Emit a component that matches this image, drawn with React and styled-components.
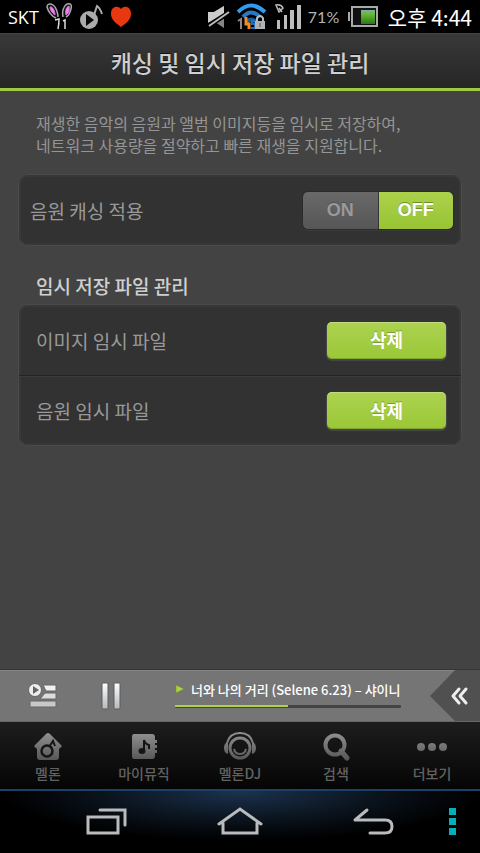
import React, { useState } from 'react';
import styled, { createGlobalStyle } from 'styled-components';

const GlobalStyle = createGlobalStyle`
  * {
    box-sizing: border-box;
  }

  body {
    margin: 0;
    background-color: #434343;
    font-family: 'Noto Sans CJK KR', 'Noto Sans', sans-serif;
  }

  button, input {
    font-family: inherit;
  }

  svg {
    flex-shrink: 0;
  }
`;

const PageContainer = styled.div`
  display: flex;
  flex-direction: column;
  min-height: 100vh;
  background-color: #434343;
`;

const StatusBar = styled.div`
  display: flex;
  justify-content: space-between;
  align-items: center;
  height: 33px;
  padding: 0 8px;
  background-color: black;
  color: white;
`;

const StatusGroup = styled.div`
  display: flex;
  align-items: center;
  gap: ${({ $gap }) => $gap}px;
`;

const Carrier = styled.span`
  font-family: 'Open Sans', sans-serif;
  font-size: 18px;
  line-height: 32px;
`;

const BatteryLevel = styled.span`
  width: 34px;
  color: #b5b5b5;
  font-family: Lato, sans-serif;
  font-size: 16px;
  white-space: nowrap;
`;

const Clock = styled.time`
  margin-left: 4px;
  font-size: 21px;
  line-height: 32px;
  white-space: nowrap;
`;

const Header = styled.header`
  display: flex;
  justify-content: center;
  align-items: center;
  height: 58px;
  border-bottom: 3px solid #9fcb41;
  background: linear-gradient(#393939, #262626);
  box-shadow: inset 0 1px #444;

  h1 {
    margin: 0;
    padding-top: 2px;
    color: #cfcfcf;
    font-size: 23px;
    font-weight: 500;
    line-height: 32px;
    text-shadow: 0 -1px #111;
  }
`;

const Content = styled.main`
  flex: 1;
  padding: 21px 18px;
`;

const Description = styled.p`
  margin: 0 18px 18px;
  color: #959595;
  font-size: 16px;
  line-height: 22px;
`;

const Panel = styled.section`
  border: 1px solid #4a4a4a;
  border-radius: 10px;
  background-color: #323232;
  box-shadow: inset 0 0 0 2px #373737;
`;

const SectionTitle = styled.h2`
  margin: 24px 18px 2px;
  color: #cfcfcf;
  font-size: 19px;
  font-weight: 500;
  line-height: 32px;
`;

const Row = styled.div`
  display: flex;
  justify-content: space-between;
  align-items: center;
  height: 70px;
  padding: ${({ $wide }) => ($wide ? '0 8px 0 11px' : '0 15px 0 17px')};
  color: #999;
  font-size: 19px;

  & + & {
    border-top: 1px solid #242424;
    box-shadow: inset 0 1px #3c3c3c;
  }
`;

const Switch = styled.div`
  display: flex;
  width: 150px;
  height: 37px;
  overflow: hidden;
  border-radius: 5px;
  box-shadow: 0 0 0 1px #2b2b2b, 0 2px #3b3b3b;
`;

const SwitchOption = styled.label`
  display: flex;
  flex: 1;
  justify-content: center;
  align-items: center;
  background: linear-gradient(#696969, #565656);
  color: #9a9a9a;
  font-family: 'Liberation Sans', Arial, sans-serif;
  font-size: 18px;
  font-weight: bold;
  text-shadow: 0 -1px #505050;
  cursor: pointer;

  & + & {
    border-left: 1px solid #343434;
  }

  input {
    appearance: none;
    width: 0;
    height: 0;
    margin: 0;
  }

  &:has(input:checked) {
    background: linear-gradient(#acd14b, #98c434);
    color: white;
    text-shadow: 0 -1px #6d912a;
  }
`;

const DeleteButton = styled.button`
  width: 119px;
  height: 37px;
  padding: 0 0 2px;
  border: none;
  border-radius: 5px;
  background: linear-gradient(#add250, #9ac737);
  box-shadow: inset 0 1px #c0dc7c, inset 0 -1px #7fa62d, 0 1px 1px 1px #484848;
  color: white;
  font-size: 18px;
  font-weight: 700;
  text-shadow: 0 -1px #7a9f30;
  cursor: pointer;
`;

const PlayerBar = styled.section`
  display: flex;
  align-items: stretch;
  height: 53px;
  border-top: 1px solid #353535;
  border-bottom: 1px solid #666;
  background-color: #757575;
  box-shadow: inset 0 1px #858585;
`;

const IconButton = styled.button`
  display: flex;
  justify-content: center;
  align-items: center;
  width: ${({ $width }) => $width}px;
  padding: 0;
  border: none;
  background: none;
  cursor: pointer;
`;

const Track = styled.div`
  flex: 1;
  min-width: 0;
  padding: 8px 29px 0 39px;
`;

const TrackTitle = styled.div`
  display: flex;
  align-items: center;
  gap: 6px;
  height: 22px;
  color: white;
  font-size: 13px;
  font-weight: 500;
  white-space: nowrap;
`;

const Progress = styled.div`
  height: 3px;
  margin-top: 5px;
  border-radius: 1px;
  background-color: #444;
`;

const ProgressFill = styled.div`
  height: 2px;
  background-color: #a9d443;
`;

const TabBar = styled.nav`
  display: flex;
  height: 67px;
  background: linear-gradient(#1d1d1d, #050505);
`;

const Tab = styled.a`
  display: flex;
  flex: 1;
  flex-direction: column;
  align-items: center;
  padding-top: 10px;
  color: #626262;
  font-size: 14px;
  font-weight: 500;
  line-height: 22px;
  text-decoration: none;
  white-space: nowrap;
`;

const SystemBar = styled.footer`
  display: flex;
  align-items: center;
  height: 64px;
  border-top: 2px solid #1d4069;
  background: radial-gradient(ellipse 50% 80% at 50% 0, #1b3350, #0a121b 60%, black);
`;

const SystemKeys = styled.div`
  display: flex;
  flex: 1;
  justify-content: center;
  gap: 87px;
  padding-left: 54px;
`;

const BunnyIcon = () => (
  <svg width="27" height="28" viewBox="0 0 27 28" fill="#111" stroke="#aaa" strokeWidth="1.500">
    <path d="M10 15C6 14 2 8 1 4C1 1 4 0 7 2C10 4 12 10 12 14" />
    <path d="M17 14C16 9 17 3 21 1C25 0 26 2 25 6C24 10 22 13 20 14" />
    <path
      d="M9 12C6 10 4 7 4 4C6 3 9 7 9 12ZM20 12C19 8 20 4 23 3C24 6 23 10 20 12Z"
      fill="#ee82ee"
      stroke="#d678df"
      strokeWidth="1"
    />
    <path d="M9 17L13 16Q13 21 12 26M17 18L19 17V26" fill="none" stroke="#ddd" />
  </svg>
);

const MelonStatusIcon = () => (
  <svg width="23" height="26" viewBox="0 0 23 26">
    <circle cx="9" cy="16" r="9" fill="#ababab" />
    <path d="M6 10L14 16L6 22Z" fill="#080808" />
    <path d="M14 11L17 2Q20 4 22 10" fill="none" stroke="#ababab" strokeWidth="2" />
  </svg>
);

const HeartIcon = () => (
  <svg width="22" height="22" viewBox="0 0 22 22">
    <path
      d="M11 3C14-1 21 0 21 8C21 14 15 18 11 21C7 18 1 14 1 8C1 0 8-1 11 3Z"
      fill="#e8380f"
    />
  </svg>
);

const MuteIcon = () => (
  <svg width="24" height="26" viewBox="0 0 24 26">
    <path d="M1 8H7L17 2V24L8 18H1Z" fill="#858585" />
    <path d="M1 8H7L17 2V10L1 19Z" fill="#ccc" />
    <path d="M1 22L23 8" stroke="black" strokeWidth="5" />
    <path d="M2 22L22 8" stroke="#bbb" strokeWidth="2" />
  </svg>
);

const WifiIcon = () => (
  <svg width="31" height="27" viewBox="0 0 31 27">
    <g fill="none" strokeWidth="4">
      <path d="M1 9Q14-4 28 9" stroke="#2f9cf0" />
      <path d="M6 14Q14 5 23 14" stroke="#2878c4" />
      <path d="M10 19Q14 14 19 19" stroke="#1d5ba0" />
    </g>
    <path d="M1 18L4 16V26" fill="none" stroke="#888" strokeWidth="2" />
    <path d="M9 14V21H12V26" fill="none" stroke="#f68a1d" strokeWidth="3" />
    <path d="M19 18H15V21H18V25H14" fill="none" stroke="#2274ba" strokeWidth="2" />
    <path d="M20 19V15Q23 11 26 15V19" fill="none" stroke="#bbb" strokeWidth="2" />
    <rect x="18" y="18" width="10" height="8" fill="#b2b2b2" />
    <path d="M23 20V24" stroke="#555" />
  </svg>
);

const SignalIcon = () => (
  <svg width="28" height="27" viewBox="0 0 28 27">
    <path d="M3 17H6V26H3ZM10 12H13V26H10ZM16 7H20V26H16ZM23 2H27V26H23Z" fill="#bdbdbd" />
    <path d="M2 2Q7 1 9 5L5 9ZM5 5L8 9" fill="none" stroke="#bdbdbd" strokeWidth="1.500" />
  </svg>
);

const BatteryIcon = () => (
  <svg width="30" height="22" viewBox="0 0 30 22">
    <defs>
      <linearGradient id="charge" x1="0" y1="0" x2="0" y2="1">
        <stop offset="0" stopColor="#78b6a0" />
        <stop offset="0.350" stopColor="#68b32c" />
        <stop offset="1" stopColor="#24791c" />
      </linearGradient>
    </defs>
    <path d="M1 6V15" stroke="#aaa" strokeWidth="2" />
    <rect x="4" y="1" width="25" height="19" fill="#111" stroke="#aaa" strokeWidth="2" />
    <rect x="13" y="4" width="14" height="14" fill="url(#charge)" />
  </svg>
);

const PlaylistIcon = () => (
  <svg width="30" height="28" viewBox="0 0 30 28">
    <path d="M15 3H28V9H18Z" fill="#f0f0f0" stroke="#666" />
    <path d="M17 11H28V17H12Z" fill="#ddd" stroke="#666" />
    <rect x="2" y="19" width="26" height="6" rx="1" fill="#c8c8c8" stroke="#666" />
    <circle cx="7" cy="8" r="6.500" fill="#eee" stroke="#666" />
    <path d="M5 4L11 8L5 12Z" fill="#666" />
  </svg>
);

const PauseIcon = () => (
  <svg width="20" height="28" viewBox="0 0 20 28">
    <defs>
      <linearGradient id="metal" x1="0" y1="0" x2="0" y2="1">
        <stop offset="0" stopColor="#fff" />
        <stop offset="1" stopColor="#b3b9be" />
      </linearGradient>
    </defs>
    <rect x="1" y="1" width="6" height="26" rx="1" fill="url(#metal)" stroke="#5c5c5c" />
    <rect x="13" y="1" width="6" height="26" rx="1" fill="url(#metal)" stroke="#5c5c5c" />
  </svg>
);

const PlayIcon = () => (
  <svg width="10" height="10" viewBox="0 0 10 10">
    <path d="M1 1L9 5L1 9Z" fill="#a9d443" stroke="#668a27" strokeWidth="0.500" />
  </svg>
);

const ExpandIcon = () => (
  <svg width="50" height="51" viewBox="0 0 50 51">
    <path d="M0 26L25 0H50V51H25Z" fill="#505050" />
    <path
      d="M29 19L23 26L29 33M36 19L30 26L36 33"
      fill="none"
      stroke="#eee"
      strokeWidth="3"
      strokeLinecap="round"
      strokeLinejoin="round"
    />
  </svg>
);

const MelonIcon = () => (
  <>
    <path d="M1 14L13 2Q15 0 17 2L29 14L26 17V25Q26 28 23 28H7Q4 28 4 25V17Z" fill="url(#tab)" />
    <circle cx="14" cy="19" r="5.500" fill="none" stroke="#151515" strokeWidth="2.500" />
    <path d="M16 15L20 9L22 14" fill="none" stroke="#151515" strokeWidth="2" />
  </>
);

const MyMusicIcon = () => (
  <>
    <path
      d="M5 2H23Q26 2 26 5V8H28V11H26V13H28V16H26V18H28V21H26V24Q26 27 23 27H5Q3 27 3 24V5Q3 2 5 2Z"
      fill="url(#tab)"
    />
    <path d="M15 19V8Q16 12 20 13V17" fill="none" stroke="#151515" strokeWidth="2" />
    <ellipse cx="13" cy="19" rx="3.500" ry="3" fill="#151515" />
  </>
);

const DjIcon = () => (
  <>
    <g fill="none" stroke="url(#tab)">
      <path d="M2 11C4 4 9 1 15 1S26 4 28 11" strokeWidth="2" />
      <circle cx="15" cy="16" r="10" strokeWidth="3" />
      <path d="M9 17Q10 22 15 22Q20 22 21 17" strokeWidth="2" />
    </g>
    <path d="M3 10Q-1 11-1 16T3 22ZM27 10Q31 11 31 16T27 22Z" fill="url(#tab)" />
  </>
);

const SearchIcon = () => (
  <g fill="none" stroke="url(#tab)">
    <circle cx="14" cy="13" r="9.500" strokeWidth="4" />
    <path d="M20 19L26 26" strokeWidth="5" strokeLinecap="round" />
  </g>
);

const MoreIcon = () => (
  <g fill="url(#tab)">
    <circle cx="4" cy="15" r="4" />
    <circle cx="15" cy="15" r="4" />
    <circle cx="26" cy="15" r="4" />
  </g>
);

const TabIcon = ({ children }) => (
  <svg width="34" height="30" viewBox="-2 0 34 30">
    <defs>
      <linearGradient id="tab" gradientUnits="userSpaceOnUse" x1="0" y1="0" x2="0" y2="29">
        <stop offset="0" stopColor="#929292" />
        <stop offset="1" stopColor="#555" />
      </linearGradient>
    </defs>
    {children}
  </svg>
);

const tabs = [
  { label: '멜론', Icon: MelonIcon },
  { label: '마이뮤직', Icon: MyMusicIcon },
  { label: '멜론DJ', Icon: DjIcon },
  { label: '검색', Icon: SearchIcon },
  { label: '더보기', Icon: MoreIcon },
];

const SystemIcon = ({ children }) => (
  <svg
    width="46"
    height="32"
    viewBox="0 0 46 32"
    fill="none"
    stroke="#babbbd"
    strokeWidth="3"
    strokeLinecap="round"
  >
    {children}
  </svg>
);

const App = () => {
  const [caching, setCaching] = useState('OFF');
  const [playing, setPlaying] = useState(true);

  return (
    <PageContainer>
      <GlobalStyle />
      <StatusBar>
        <StatusGroup $gap={7}>
          <Carrier>SKT</Carrier>
          <BunnyIcon />
          <MelonStatusIcon />
          <HeartIcon />
        </StatusGroup>
        <StatusGroup $gap={6}>
          <MuteIcon />
          <WifiIcon />
          <SignalIcon />
          <BatteryLevel>71%</BatteryLevel>
          <BatteryIcon />
          <Clock>오후 4:44</Clock>
        </StatusGroup>
      </StatusBar>

      <Header>
        <h1>캐싱 및 임시 저장 파일 관리</h1>
      </Header>

      <Content>
        <Description>
          재생한 음악의 음원과 앨범 이미지등을 임시로 저장하여,
          <br />
          네트워크 사용량을 절약하고 빠른 재생을 지원합니다.
        </Description>
        <Panel>
          <Row $wide>
            <span id="caching">음원 캐싱 적용</span>
            <Switch role="radiogroup" aria-labelledby="caching">
              {['ON', 'OFF'].map((value) => (
                <SwitchOption key={value}>
                  <input
                    type="radio"
                    name="caching"
                    value={value}
                    checked={caching === value}
                    onChange={() => setCaching(value)}
                  />
                  {value}
                </SwitchOption>
              ))}
            </Switch>
          </Row>
        </Panel>

        <SectionTitle>임시 저장 파일 관리</SectionTitle>
        <Panel>
          <Row>
            <span id="image-files">이미지 임시 파일</span>
            <DeleteButton aria-describedby="image-files">삭제</DeleteButton>
          </Row>
          <Row>
            <span id="music-files">음원 임시 파일</span>
            <DeleteButton aria-describedby="music-files">삭제</DeleteButton>
          </Row>
        </Panel>
      </Content>

      <PlayerBar>
        <IconButton $width={86} aria-label="재생목록">
          <PlaylistIcon />
        </IconButton>
        <IconButton $width={50} aria-label="일시정지" onClick={() => setPlaying(!playing)}>
          <PauseIcon />
        </IconButton>
        <Track>
          <TrackTitle>
            <PlayIcon />
            <span>너와 나의 거리 (Selene 6.23) – 샤이니</span>
          </TrackTitle>
          <Progress>
            <ProgressFill style={{ width: '50%' }} />
          </Progress>
        </Track>
        <IconButton $width={50} aria-label="펼치기">
          <ExpandIcon />
        </IconButton>
      </PlayerBar>

      <TabBar>
        {tabs.map(({ label, Icon }) => (
          <Tab key={label} href="#">
            <TabIcon>
              <Icon />
            </TabIcon>
            {label}
          </Tab>
        ))}
      </TabBar>

      <SystemBar>
        <SystemKeys>
          <IconButton $width={46} aria-label="최근 앱">
            <SystemIcon>
              <path d="M4 11H34V27H4ZM16 4H41V19" />
            </SystemIcon>
          </IconButton>
          <IconButton $width={46} aria-label="홈">
            <SystemIcon>
              <path d="M2 18L23 3L44 18M6 17V27H40V17" />
            </SystemIcon>
          </IconButton>
          <IconButton $width={46} aria-label="뒤로">
            <SystemIcon>
              <path d="M17 4L5 14H35Q42 14 42 20.500Q42 27 35 27H20" strokeLinejoin="round" />
            </SystemIcon>
          </IconButton>
        </SystemKeys>
        <IconButton $width={54} aria-label="메뉴">
          <svg width="8" height="28" viewBox="0 0 8 28">
            <path d="M0 0H7V7H0ZM0 10H7V17H0ZM0 20H7V27H0Z" fill="#05aebb" />
          </svg>
        </IconButton>
      </SystemBar>
    </PageContainer>
  );
};

export default App;
